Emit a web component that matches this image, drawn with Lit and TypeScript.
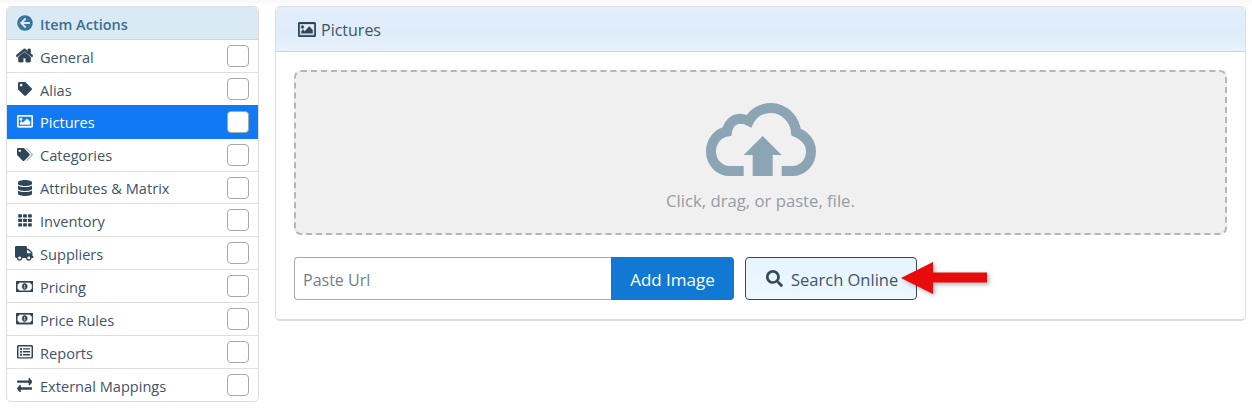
import { LitElement, html, css, svg } from "lit";
import { customElement } from "lit/decorators.js";

type Ic = { vb: string; w: number; h: number; paths: [string, number?][]; thick?: number };

const ICONS: Record<string, Ic> = {
  back: { vb: "0 0 512 512", w: 16, h: 16, paths: [["M256 504C119 504 8 393 8 256S119 8 256 8s248 111 248 248-111 248-248 248zm28.9-143.6L209.4 288H392c13.3 0 24-10.7 24-24v-16c0-13.3-10.7-24-24-24H209.4l75.5-72.4c9.7-9.3 9.9-24.8.4-34.3l-11-10.9c-9.4-9.4-24.6-9.4-33.9 0L107.7 239c-9.4 9.4-9.4 24.6 0 33.9l132.7 132.7c9.4 9.4 24.6 9.4 33.9 0l11-10.9c9.5-9.5 9.3-25-.4-34.3z"]] },
  home: { vb: "0 0 576 512", w: 17, h: 15, thick: 26, paths: [["M488 312.7V456c0 13.3-10.7 24-24 24H348c-6.6 0-12-5.4-12-12V356c0-6.6-5.4-12-12-12h-72c-6.6 0-12 5.4-12 12v112c0 6.6-5.4 12-12 12H112c-13.3 0-24-10.7-24-24V312.7c0-3.6 1.6-7 4.4-9.3l188-154.8c4.4-3.6 10.8-3.6 15.3 0l188 154.8c2.7 2.3 4.3 5.7 4.3 9.3zm83.6-60.9L488 182.9V44.4c0-6.6-5.4-12-12-12h-56c-6.6 0-12 5.4-12 12V117l-89.5-73.7c-17.7-14.6-43.3-14.6-61 0L4.4 251.8c-5.1 4.2-5.8 11.8-1.6 16.9l25.5 31c4.2 5.1 11.8 5.8 16.9 1.6l235.2-193.7c4.4-3.6 10.8-3.6 15.3 0l235.2 193.7c5.1 4.2 12.7 3.5 16.9-1.6l25.5-31c4.2-5.2 3.4-12.7-1.6-16.9z"]] },
  tag: { vb: "0 0 512 512", w: 14, h: 14, paths: [["M0 252.118V48C0 21.49 21.49 0 48 0h204.118a48 48 0 0 1 33.941 14.059l211.882 211.882c18.745 18.745 18.745 49.137 0 67.882L293.823 497.941c-18.745 18.745-49.137 18.745-67.882 0L14.059 286.059A48 48 0 0 1 0 252.118zM112 64c-26.51 0-48 21.49-48 48s21.49 48 48 48 48-21.49 48-48-21.49-48-48-48z"]] },
  tags: { vb: "0 0 640 512", w: 16, h: 13, paths: [
    ["M497.941 225.941L286.059 14.059A48 48 0 0 0 252.118 0H48C21.49 0 0 21.49 0 48v204.118a48 48 0 0 0 14.059 33.941l211.882 211.882c18.744 18.745 49.136 18.746 67.882 0l204.118-204.118c18.745-18.745 18.745-49.137 0-67.882zM112 160c-26.51 0-48-21.49-48-48s21.49-48 48-48 48 21.49 48 48-21.49 48-48 48z"],
    ["M625.941 293.823L421.823 497.941c-18.745 18.745-49.137 18.745-67.882 0l-.36-.36L527.64 323.522c16.999-16.999 26.36-39.6 26.36-63.64s-9.362-46.641-26.36-63.64L331.397 0h48.721a48 48 0 0 1 33.941 14.059l211.882 211.882c18.745 18.745 18.745 49.137 0 67.882z", 0.35],
  ] },
  image: { vb: "0 64 512 384", w: 16, h: 12.6, thick: 12, paths: [["M464 64H48C21.49 64 0 85.49 0 112v288c0 26.51 21.49 48 48 48h416c26.51 0 48-21.49 48-48V112c0-26.51-21.49-48-48-48zm-6 336H54a6 6 0 0 1-6-6V118a6 6 0 0 1 6-6h404a6 6 0 0 1 6 6v276a6 6 0 0 1-6 6zM128 152c-22.091 0-40 17.909-40 40s17.909 40 40 40 40-17.909 40-40-17.909-40-40-40zM96 352h320v-80l-87.515-87.515c-4.686-4.686-12.284-4.686-16.971 0L192 304l-39.515-39.515c-4.686-4.686-12.284-4.686-16.971 0L96 304v48z"]] },
  image2: { vb: "0 64 512 384", w: 18, h: 15, thick: 10, paths: [["M464 64H48C21.49 64 0 85.49 0 112v288c0 26.51 21.49 48 48 48h416c26.51 0 48-21.49 48-48V112c0-26.51-21.49-48-48-48zm-6 336H54a6 6 0 0 1-6-6V118a6 6 0 0 1 6-6h404a6 6 0 0 1 6 6v276a6 6 0 0 1-6 6zM128 152c-22.091 0-40 17.909-40 40s17.909 40 40 40 40-17.909 40-40-17.909-40-40-40zM96 352h320v-80l-87.515-87.515c-4.686-4.686-12.284-4.686-16.971 0L192 304l-39.515-39.515c-4.686-4.686-12.284-4.686-16.971 0L96 304v48z"]] },
  database: { vb: "0 0 448 512", w: 14, h: 16, paths: [["M448 73.143v45.714C448 159.143 347.667 192 224 192S0 159.143 0 118.857V73.143C0 32.857 100.333 0 224 0s224 32.857 224 73.143zM448 176v102.857C448 319.143 347.667 352 224 352S0 319.143 0 278.857V176c48.125 33.143 136.208 48.572 224 48.572S399.874 209.143 448 176zm0 160v102.857C448 479.143 347.667 512 224 512S0 479.143 0 438.857V336c48.125 33.143 136.208 48.572 224 48.572S399.874 369.143 448 336z"]] },
  truck: { vb: "0 0 640 512", w: 18.4, h: 14.7, paths: [["M624 352h-16V243.9c0-12.7-5.1-24.9-14.1-33.9L494 110.1c-9-9-21.2-14.1-33.9-14.1H416V48c0-26.5-21.5-48-48-48H48C21.5 0 0 21.5 0 48v320c0 26.5 21.5 48 48 48h16c0 53 43 96 96 96s96-43 96-96h128c0 53 43 96 96 96s96-43 96-96h48c8.8 0 16-7.2 16-16v-32c0-8.8-7.2-16-16-16zM160 464c-26.5 0-48-21.5-48-48s21.5-48 48-48 48 21.5 48 48-21.5 48-48 48zm320 0c-26.5 0-48-21.5-48-48s21.5-48 48-48 48 21.5 48 48-21.5 48-48 48zm80-208H416V144h44.1l99.9 99.9V256z"]] },
  money: { vb: "0 64 640 384", w: 17.4, h: 11.2, thick: 14, paths: [["M320 144c-53.02 0-96 50.14-96 112 0 61.85 42.98 112 96 112 53 0 96-50.13 96-112 0-61.86-42.98-112-96-112zm40 168c0 4.42-3.58 8-8 8h-64c-4.42 0-8-3.58-8-8v-16c0-4.42 3.58-8 8-8h16v-55.44l-.47.31a7.992 7.992 0 0 1-11.09-2.22l-8.88-13.31a7.992 7.992 0 0 1 2.22-11.09l15.33-10.22a23.99 23.99 0 0 1 13.31-4.03H328c4.42 0 8 3.58 8 8v88h16c4.42 0 8 3.58 8 8v16zM608 64H32C14.33 64 0 78.33 0 96v320c0 17.67 14.33 32 32 32h576c17.67 0 32-14.33 32-32V96c0-17.67-14.33-32-32-32zm-16 272c-35.35 0-64 28.65-64 64H112c0-35.35-28.65-64-64-64V176c35.35 0 64-28.65 64-64h416c0 35.35 28.65 64 64 64v160z"]] },
  list: { vb: "0 32 512 448", w: 16, h: 13.6, paths: [["M464 32H48C21.49 32 0 53.49 0 80v352c0 26.51 21.49 48 48 48h416c26.51 0 48-21.49 48-48V80c0-26.51-21.49-48-48-48zm-6 400H54a6 6 0 0 1-6-6V86a6 6 0 0 1 6-6h404a6 6 0 0 1 6 6v340a6 6 0 0 1-6 6zm-42-92v24c0 6.627-5.373 12-12 12H204c-6.627 0-12-5.373-12-12v-24c0-6.627 5.373-12 12-12h200c6.627 0 12 5.373 12 12zm0-96v24c0 6.627-5.373 12-12 12H204c-6.627 0-12-5.373-12-12v-24c0-6.627 5.373-12 12-12h200c6.627 0 12 5.373 12 12zm0-96v24c0 6.627-5.373 12-12 12H204c-6.627 0-12-5.373-12-12v-24c0-6.627 5.373-12 12-12h200c6.627 0 12 5.373 12 12zm-252 12c0 19.882-16.118 36-36 36s-36-16.118-36-36 16.118-36 36-36 36 16.118 36 36zm0 96c0 19.882-16.118 36-36 36s-36-16.118-36-36 16.118-36 36-36 36 16.118 36 36zm0 96c0 19.882-16.118 36-36 36s-36-16.118-36-36 16.118-36 36-36 36 16.118 36 36z"]] },
  exchange: { vb: "0 56 512 400", w: 15.4, h: 14.2, paths: [["M0 168v-16c0-13.255 10.745-24 24-24h360V80c0-21.367 25.899-32.042 40.971-16.971l80 80c9.372 9.373 9.372 24.569 0 33.941l-80 80C409.956 271.982 384 261.456 384 240v-48H24c-13.255 0-24-10.745-24-24zm488 152H128v-48c0-21.314-25.862-32.08-40.971-16.971l-80 80c-9.372 9.373-9.372 24.569 0 33.941l80 80C102.057 463.997 128 453.437 128 432v-48h360c13.255 0 24-10.745 24-24v-16c0-13.255-10.745-24-24-24z"]] },
  search: { vb: "0 0 512 512", w: 17, h: 17, paths: [["M505 442.7L405.3 343c-4.5-4.5-10.6-7-17-7H372c27.6-35.3 44-79.7 44-128C416 93.1 322.9 0 208 0S0 93.1 0 208s93.1 208 208 208c48.3 0 92.7-16.4 128-44v16.3c0 6.4 2.5 12.5 7 17l99.7 99.7c9.4 9.4 24.6 9.4 33.9 0l28.3-28.3c9.4-9.4 9.4-24.6.1-34zM208 336c-70.7 0-128-57.2-128-128 0-70.7 57.2-128 128-128 70.7 0 128 57.2 128 128 0 70.7-57.2 128-128 128z"]] },
};

function icon(name: string) {
  if (name === "th") {
    return html`<svg class="ic" width="14" height="13" viewBox="0 0 14 13">
      ${[0, 1, 2].flatMap((r) =>
        [0, 1, 2].map(
          (c) => svg`<rect x=${c * 4.9 + 0.2} y=${r * 4.5 + 0.2} width="3.8" height="3.4" rx="0.5" fill="currentColor"/>`
        )
      )}
    </svg>`;
  }
  const ic = ICONS[name];
  return html`<svg class="ic" width=${ic.w} height=${ic.h} viewBox=${ic.vb} preserveAspectRatio="none">
    ${ic.paths.map(
      ([d, o]) => svg`<path d=${d} fill="currentColor" fill-opacity=${o ?? 1} stroke=${ic.thick ? "currentColor" : "none"} stroke-width=${ic.thick ?? 0}/>`
    )}
  </svg>`;
}

const ROWS: [string, string][] = [
  ["General", "home"],
  ["Alias", "tag"],
  ["Pictures", "image"],
  ["Categories", "tags"],
  ["Attributes & Matrix", "database"],
  ["Inventory", "th"],
  ["Suppliers", "truck"],
  ["Pricing", "money"],
  ["Price Rules", "money"],
  ["Reports", "list"],
  ["External Mappings", "exchange"],
];

@customElement("app-root")
export class AppRoot extends LitElement {
  static styles = css`
    :host {
      display: block;
      width: 1252px;
      height: 416px;
      box-sizing: border-box;
      padding: 6px 6px 0;
      background: linear-gradient(180deg, #f8f8f8 0, #ffffff 6px);
      font-family: "Open Sans", "Noto Sans", sans-serif;
      color: #3f5468;
      font-size: 14.6px;
    }
    .page {
      display: flex;
      gap: 16px;
      align-items: flex-start;
    }
    .side {
      width: 253px;
      flex: none;
      box-sizing: border-box;
      border: 1px solid #dcdfe2;
      border-radius: 5px;
      overflow: hidden;
      background: #fff;
    }
    .side-head {
      height: 33px;
      box-sizing: border-box;
      display: flex;
      align-items: center;
      gap: 7px;
      padding: 0 0 0 10px;
      background: #d9eaf4;
      border-bottom: 1px solid #c8d9e3;
      color: #3f6d8c;
      font-weight: 600;
      font-size: 14.5px;
    }
    .side-head span {
      padding-top: 2px;
    }
    .row {
      height: 32.9px;
      box-sizing: border-box;
      display: flex;
      align-items: center;
      border-bottom: 1px solid #dcdfe2;
      padding: 0 9px 0 0;
    }
    .row:last-child {
      border-bottom: 0;
      height: 31.9px;
    }
    .row .cell {
      width: 33px;
      box-sizing: border-box;
      padding-left: 2px;
      flex: none;
      display: flex;
      justify-content: center;
      color: #2f4558;
    }
    .row .label {
      flex: 1;
      padding-top: 1.6px;
    }
    .row.on {
      background: #1279f4;
      color: #fff;
      border-bottom-color: #1279f4;
      box-shadow: 0 -1px 0 #1279f4;
    }
    .row.on .label {
      padding-top: 0;
    }
    .row.on .cell {
      color: #fff;
    }
    .side-head .ic {
      color: #39759c;
    }
    .box {
      width: 22px;
      height: 22px;
      box-sizing: border-box;
      border: 1px solid #a8a8a8;
      border-radius: 4px;
      background: #fff;
    }
    .main {
      flex: 1;
      box-sizing: border-box;
      border: 1px solid #dfe1e4;
      border-bottom: 2px solid #dcdde0;
      border-radius: 5px;
      overflow: hidden;
      background: #fff;
    }
    .main-head {
      height: 45px;
      box-sizing: border-box;
      display: flex;
      align-items: center;
      gap: 5px;
      padding: 2px 0 0 22px;
      font-size: 16px;
      color: #3f5468;
      background: linear-gradient(180deg, #e3eefb 0%, #dfecfa 60%, #e9f2fc 100%);
      border-bottom: 1px solid #ccd3dc;
    }
    .main-head .ic {
      color: #2f4558;
      margin-top: -2px;
    }
    .body {
      padding: 18px 18px 19px;
    }
    .drop {
      height: 165px;
      box-sizing: border-box;
      background: #f0f0f0;
      border: 2px dashed #b6b6b6;
      border-radius: 7px;
      display: flex;
      flex-direction: column;
      align-items: center;
      padding-top: 31px;
      gap: 13px;
      color: #959da5;
      font-size: 16.7px;
    }
    .tools {
      display: flex;
      margin-top: 22px;
      position: relative;
    }
    .url {
      width: 317px;
      height: 43px;
      box-sizing: border-box;
      border: 1px solid #a9a9a9;
      border-right: 0;
      border-radius: 4px 0 0 4px;
      display: flex;
      align-items: center;
      padding: 2px 0 0 8px;
      font-size: 16px;
      color: #6e7f8f;
      background: #fff;
    }
    .add {
      width: 123px;
      height: 43px;
      box-sizing: border-box;
      padding-top: 2px;
      display: flex;
      align-items: center;
      justify-content: center;
      background: #1179d4;
      color: #fff;
      font-size: 17px;
      border-radius: 0 4px 4px 0;
    }
    .search {
      margin-left: 11px;
      width: 172px;
      height: 43px;
      box-sizing: border-box;
      border: 1px solid #34495e;
      border-radius: 4px;
      background: linear-gradient(180deg, #e6f4fe, #eef7fe);
      display: flex;
      align-items: center;
      gap: 8px;
      padding-left: 20px;
      color: #3f5468;
      font-size: 16.5px;
    }
    .search span {
      padding-top: 2px;
    }
    .search .ic {
      color: #34495e;
    }
    .arrow {
      position: absolute;
      left: 606px;
      top: 4px;
      filter: drop-shadow(2px 2px 2px rgba(0, 0, 0, 0.3));
    }
  `;

  render() {
    return html`<div class="page">
      <aside class="side">
        <div class="side-head">${icon("back")}<span>Item Actions</span></div>
        ${ROWS.map(
          ([label, ic]) => html`<div class="row ${label === "Pictures" ? "on" : ""}">
            <span class="cell">${icon(ic)}</span>
            <span class="label">${label}</span>
            <span class="box"></span>
          </div>`
        )}
      </aside>
      <section class="main">
        <div class="main-head">${icon("image2")}<span>Pictures</span></div>
        <div class="body">
          <div class="drop">
            <svg width="110" height="73" viewBox="0 0 110 73">
              <path d="M37.7 68H24C13 68 5 59 5 48.5 5 38 12 30 21 28.5 22 20 29 15 36 16c3 0 5 1 7 2C47 10 55 5 65 5c13 0 24 11 25 24 8 3 15 10 15 19.5C105 59 97 68 86 68H75.7" fill="none" stroke="#8ba5b5" stroke-width="10"/>
              <path d="M56.7 33L75.7 52H66.7V73H46.7V52H37.7Z" fill="#8ba5b5"/>
            </svg>
            <span>Click, drag, or paste, file.</span>
          </div>
          <div class="tools">
            <div class="url">Paste Url</div>
            <div class="add">Add Image</div>
            <div class="search">${icon("search")}<span>Search Online</span></div>
            <svg class="arrow" width="90" height="36" viewBox="0 0 90 36">
              <path d="M1 17L33 1V11.5H87V21.5H33V33Z" fill="#e80b0b"/>
            </svg>
          </div>
        </div>
      </section>
    </div>`;
  }
}
